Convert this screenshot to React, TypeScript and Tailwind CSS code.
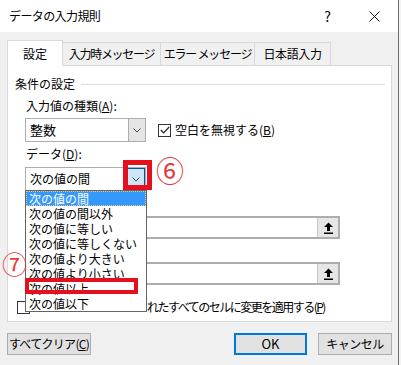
import type { ReactNode } from "react";

const FONT = { fontFamily: '"Noto Sans CJK JP", "Noto Sans", sans-serif' };

const LIST_ITEMS = [
  "次の値の間",
  "次の値の間以外",
  "次の値に等しい",
  "次の値に等しくない",
  "次の値より大きい",
  "次の値より小さい",
  "次の値以上",
  "次の値以下",
];

function Chevron() {
  return (
    <svg width="8" height="5" viewBox="0 0 8 5" fill="none">
      <path d="M0.5 0.5 L4 4 L7.5 0.5" stroke="#444" strokeWidth="1" />
    </svg>
  );
}

function RefButton() {
  return (
    <div className="flex h-full w-[21px] items-center justify-center border-l border-[#c8c8c8] bg-[#e6e6e6]">
      <svg width="11" height="12" viewBox="0 0 11 12">
        <path d="M5.5 0.5 L10 5 L7 5 L7 9 L4 9 L4 5 L1 5 Z" fill="#000" />
        <rect x="1" y="10.5" width="9" height="1.5" fill="#000" />
      </svg>
    </div>
  );
}

function Btn({ children, className = "" }: { children: ReactNode; className?: string }) {
  return (
    <div
      className={`flex h-[22px] items-center justify-center whitespace-nowrap bg-[#e1e1e1] text-[12px] text-black ${className}`}
    >
      {children}
    </div>
  );
}

export default function App() {
  return (
    <div className="relative h-[365px] w-[401px] overflow-hidden bg-[#f3f3f3]" style={FONT}>
      <div className="flex h-[365px] w-[399px] flex-col border-r border-[#6f6f6f] bg-[#f0f0f0]">
        {/* title bar */}
        <div className="flex h-[32px] shrink-0 items-center bg-white text-[12px] text-black">
          <span className="pl-[9px] tracking-[-0.6px]">データの入力規則</span>
          <span className="ml-auto mr-[38px] text-[14px]">?</span>
          <svg width="11" height="11" viewBox="0 0 11 11" className="mr-[18px]">
            <path d="M0.5 0.5 L10.5 10.5 M10.5 0.5 L0.5 10.5" stroke="#111" strokeWidth="1" />
          </svg>
        </div>

        {/* tabs */}
        <div className="mt-[8px] flex h-[25px] items-end pl-[7px] text-[12px] text-black">
          <div className="relative z-10 -mb-px flex h-[26px] w-[56px] items-center justify-center border border-b-0 border-[#d9d9d9] bg-white">
            設定
          </div>
          <div className="-ml-px flex h-[23px] w-[99px] items-center justify-center border border-b-0 border-[#d9d9d9] tracking-[-1.3px]">
            入力時メッセージ
          </div>
          <div className="-ml-px flex h-[23px] w-[95px] items-center justify-center border border-b-0 border-[#d9d9d9] tracking-[-1.2px]">
            エラー メッセージ
          </div>
          <div className="-ml-px flex h-[23px] w-[77px] items-center justify-center border border-b-0 border-[#d9d9d9] tracking-[-0.4px]">
            日本語入力
          </div>
        </div>

        {/* panel */}
        <div className="relative mx-[7px] h-[257px] w-[385px] border border-[#d9d9d9] bg-white text-[12px] text-black">
          <div className="mt-[9px] flex items-center pl-[7px]">
            <span>条件の設定</span>
            <div className="ml-[6px] mr-[6px] h-px flex-1 bg-[#dcdcdc]" />
          </div>

          <div className="mt-[4px] pl-[18px]">
            入力値の種類(<span className="underline">A</span>):
          </div>
          <div className="mt-[3px] flex items-center pl-[17px]">
            <div className="flex h-[24px] w-[121px] items-stretch border border-[#adadad] bg-white">
              <span className="flex flex-1 items-center pl-[4px] text-[13px]">整数</span>
              <div className="flex w-[17px] items-center justify-center border-l border-[#adadad] bg-[#e5e5e5]">
                <Chevron />
              </div>
            </div>
            <div className="ml-[12px] flex h-[13px] w-[13px] items-center justify-center border border-[#333] bg-white">
              <svg width="10" height="8" viewBox="0 0 10 8">
                <path d="M0.8 4 L3.6 6.8 L9.2 1" stroke="#222" strokeWidth="1.2" fill="none" />
              </svg>
            </div>
            <span className="ml-[4px]">
              空白を無視する(<span className="underline">B</span>)
            </span>
          </div>

          <div className="mt-[3px] pl-[18px]">
            データ(<span className="underline">D</span>):
          </div>
          <div className="mt-[4px] pl-[17px]">
            <div className="flex h-[24px] w-[121px] items-stretch border border-[#adadad] bg-white">
              <span className="flex flex-1 items-center pl-[4px]">次の値の間</span>
              <div className="flex w-[18px] items-center justify-center border border-[#005499] bg-[#cce4f7]">
                <Chevron />
              </div>
            </div>
          </div>

          {/* min / max fields (labels hidden under the open list) */}
          <div className="mt-[25px] pl-[17px]">
            <div className="flex h-[23px] w-[315px] border-2 border-[#adadad] bg-white">
              <div className="flex-1" />
              <RefButton />
            </div>
          </div>

          <div className="mt-[23px] pl-[17px]">
            <div className="flex h-[23px] w-[315px] border-2 border-[#adadad] bg-white">
              <div className="flex-1" />
              <RefButton />
            </div>
          </div>

          <div className="mt-[13px] flex items-center pl-[9px]">
            <div className="h-[13px] w-[13px] border border-[#333] bg-white" />
            <span className="ml-[117px] whitespace-nowrap tracking-[-1.5px]">
              れたすべてのセルに変更を適用する(<span className="underline">P</span>)
            </span>
          </div>

          {/* opened dropdown list */}
          <div className="absolute left-[17px] top-[124px] z-20 w-[122px] border border-[#646464] bg-white">
            {LIST_ITEMS.map((item, i) => (
              <div
                key={item}
                className={
                  i === 0
                    ? "h-[15px] border border-dotted border-[#f5c36b] bg-[#3399ff] pl-[2px] leading-[13px] text-white"
                    : "h-[15px] pl-[3px] leading-[15px]"
                }
              >
                {item}
              </div>
            ))}
          </div>
        </div>

        {/* bottom buttons */}
        <div className="mt-[11px] flex items-center pl-[7px]">
          <Btn className="w-[84px] border border-[#adadad] tracking-[-0.7px]">
            すべてクリア(<span className="underline">C</span>)
          </Btn>
          <Btn className="ml-[143px] w-[73px] border-2 border-[#0078d7] text-[13px]">OK</Btn>
          <Btn className="ml-[11px] w-[74px] border border-[#adadad] tracking-[-0.5px]">キャンセル</Btn>
        </div>
      </div>

      {/* annotations */}
      <div className="absolute left-[123px] top-[160px] z-30 h-[30px] w-[29px] border-[5px] border-[#e60f1e]" />
      <div className="absolute left-[156px] top-[154px] z-30 text-[28px] leading-[32px] text-[#e83a3a]">⑥</div>
      <div className="absolute left-[25px] top-[278px] z-30 h-[16px] w-[113px] border-[4px] border-[#e60f1e]" />
      <div className="absolute left-[2px] top-[249px] z-30 text-[25px] leading-[28px] text-[#e83a3a]">⑦</div>
    </div>
  );
}
